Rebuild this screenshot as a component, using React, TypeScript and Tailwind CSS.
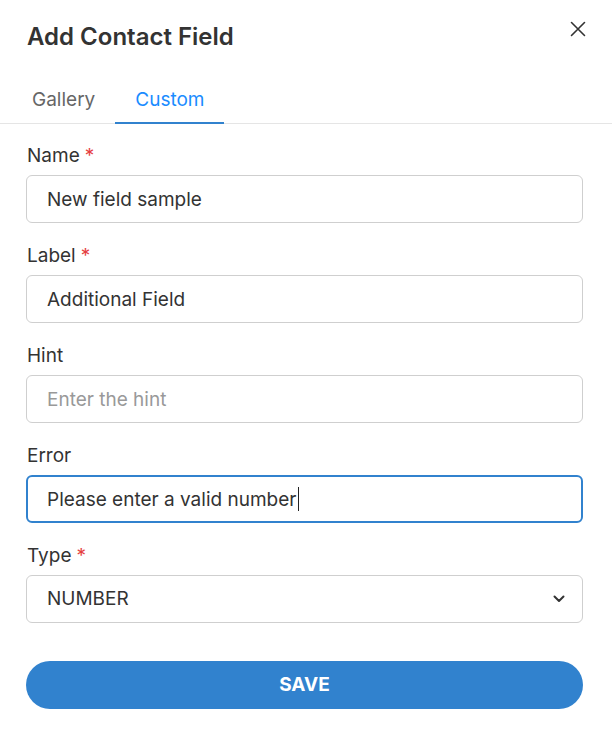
import { useState } from "react";

function Field({
  label,
  required,
  children,
}: {
  label: string;
  required?: boolean;
  children: React.ReactNode;
}) {
  return (
    <div className="mb-[21px]">
      <label className="block pl-px text-[19px] leading-[24px] text-[#333] mb-[7px]">
        {label}
        {required && <span className="text-[#e53e3e] ml-[5px]">*</span>}
      </label>
      {children}
    </div>
  );
}

const baseInput =
  "w-full h-12 rounded-md bg-white text-[19px] text-[#333] placeholder:text-[#999] outline-none";

export default function App() {
  const [name, setName] = useState("New field sample");
  const [label, setLabel] = useState("Additional Field");
  const [hint, setHint] = useState("");
  const [error, setError] = useState("Please enter a valid number");

  const inputCls = `${baseInput} px-5 border border-[#cfcfcf]`;

  return (
    <div
      className="w-[612px] h-[739px] bg-white"
      style={{ fontFamily: "Inter, 'Noto Sans', sans-serif" }}
    >
      {/* Header */}
      <div className="flex items-start justify-between pl-[27px] pr-[26px] pt-[21px]">
        <h1 className="text-[24px] leading-[32px] font-semibold text-[#333]">
          Add Contact Field
        </h1>
        <button className="text-[#333]">
          <svg width="16" height="16" viewBox="0 0 16 16" fill="none">
            <path
              d="M1.5 1.5L14.5 14.5M14.5 1.5L1.5 14.5"
              stroke="currentColor"
              strokeWidth="1.6"
              strokeLinecap="round"
            />
          </svg>
        </button>
      </div>

      {/* Tabs */}
      <div className="flex mt-[26px] border-b border-[#e5e5e5] pl-[12px]">
        <button className="px-5 pt-[9px] pb-[10px] leading-[24px] text-[19px] text-[#666] border-b-2 border-transparent -mb-px">
          Gallery
        </button>
        <button className="px-5 pt-[9px] pb-[10px] leading-[24px] text-[19px] text-[#1a8cff] border-b-2 border-[#3182ce] -mb-px">
          Custom
        </button>
      </div>

      {/* Form */}
      <div className="pl-[26px] pr-[29px] pt-5">
        <Field label="Name" required>
          <input className={inputCls} value={name} onChange={(e) => setName(e.target.value)} />
        </Field>
        <Field label="Label" required>
          <input className={inputCls} value={label} onChange={(e) => setLabel(e.target.value)} />
        </Field>
        <Field label="Hint">
          <input
            className={inputCls}
            placeholder="Enter the hint"
            value={hint}
            onChange={(e) => setHint(e.target.value)}
          />
        </Field>
        <Field label="Error">
          <div className="relative">
            <input
              className={`${baseInput} pl-[19px] pr-5 border-2 border-[#3182ce] caret-transparent`}
              value={error}
              onChange={(e) => setError(e.target.value)}
            />
            {/* focused caret */}
            <span className="absolute left-[272px] top-[12px] w-px h-[24px] bg-[#222] pointer-events-none" />
          </div>
        </Field>
        <Field label="Type" required>
          <div className="relative">
            <select className={`${inputCls} appearance-none`} defaultValue="NUMBER">
              <option>NUMBER</option>
              <option>TEXT</option>
              <option>DATE</option>
            </select>
            <svg
              className="absolute right-[18px] top-[20px] pointer-events-none"
              width="12"
              height="8"
              viewBox="0 0 12 8"
              fill="none"
            >
              <path
                d="M1.5 1.5L6 6L10.5 1.5"
                stroke="#333"
                strokeWidth="2"
                strokeLinecap="round"
                strokeLinejoin="round"
              />
            </svg>
          </div>
        </Field>

        <button className="w-full h-12 mt-[17px] rounded-full bg-[#3182ce] text-white text-[19px] font-bold">
          SAVE
        </button>
      </div>
    </div>
  );
}
